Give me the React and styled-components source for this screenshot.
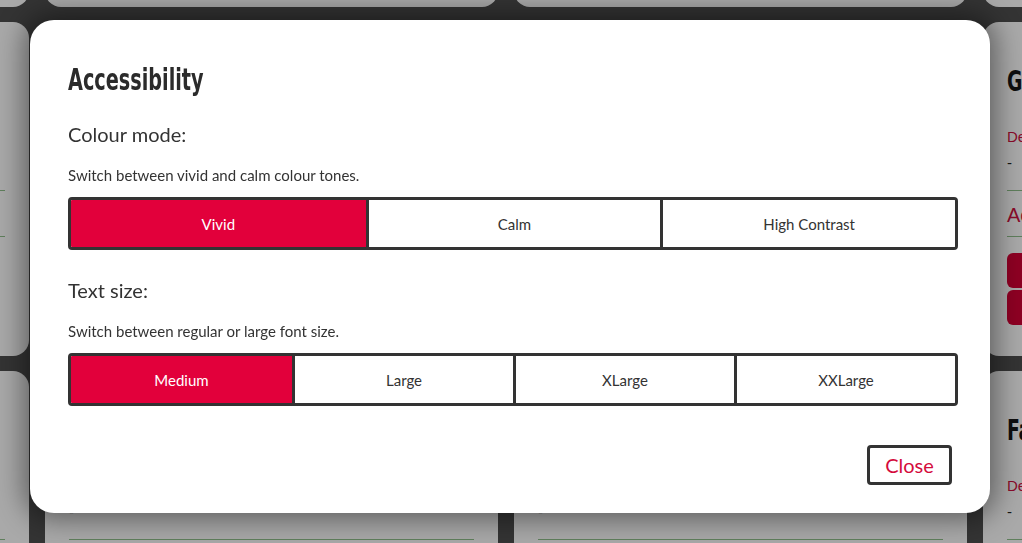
import styled, { createGlobalStyle } from "styled-components";

const GlobalStyle = createGlobalStyle`
  html, body {
    margin: 0;
    padding: 0;
    height: 100%;
    overflow: hidden;
    background: #343434;
  }
  * {
    box-sizing: border-box;
  }
`;

const cards = [
  { title: "Dance", desc: "Description", area: "Arts" },
  { title: "Drama", desc: "Description", area: "Arts" },
  { title: "Debate", desc: "Description", area: "Arts" },
  { title: "Drawing", desc: "Description", area: "Arts" },
  { title: "Cooking", desc: "Description", area: "Arts" },
  { title: "Chess", desc: "Description", area: "Arts" },
  { title: "Choir", desc: "Description", area: "Arts" },
  { title: "Gardening", desc: "Description", area: "Active" },
  { title: "Football", desc: "Description", area: "Active" },
  { title: "Fencing", desc: "Description", area: "Active" },
  { title: "Film", desc: "Description", area: "Active" },
  { title: "Fashion", desc: "Description", area: "Active" },
];

const colourModes = ["Vivid", "Calm", "High Contrast"];
const textSizes = ["Medium", "Large", "XLarge", "XXLarge"];

const App = () => {
  return (
    <>
      <GlobalStyle />
      <Page>
        <CardGrid>
          {cards.map((card) => (
            <Card key={card.title}>
              <CardTitle>{card.title}</CardTitle>
              <CardLabel>{card.desc}</CardLabel>
              <CardValue>-</CardValue>
              <CardRule $gap={17} />
              <CardArea>{card.area}</CardArea>
              <CardRule $gap={10} />
              <CardActions>
                <CardButton>More info</CardButton>
                <CardButton>Sign up</CardButton>
              </CardActions>
            </Card>
          ))}
        </CardGrid>
      </Page>
      <Overlay>
        <Modal>
          <ModalTitle>Accessibility</ModalTitle>
          <SectionLabel>Colour mode:</SectionLabel>
          <SectionHint>Switch between vivid and calm colour tones.</SectionHint>
          <Segmented $count={colourModes.length}>
            {colourModes.map((mode, i) => (
              <Segment key={mode} $active={i === 0}>
                {mode}
              </Segment>
            ))}
          </Segmented>
          <SectionLabel $spaced>Text size:</SectionLabel>
          <SectionHint>Switch between regular or large font size.</SectionHint>
          <Segmented $count={textSizes.length}>
            {textSizes.map((size, i) => (
              <Segment key={size} $active={i === 0}>
                {size}
              </Segment>
            ))}
          </Segmented>
          <Footer>
            <CloseButton>Close</CloseButton>
          </Footer>
        </Modal>
      </Overlay>
    </>
  );
};

const Page = styled.div`
  width: 1022px;
  height: 543px;
  overflow: hidden;
`;

const CardGrid = styled.div`
  display: grid;
  grid-template-columns: repeat(4, 453px);
  grid-auto-rows: 334px;
  gap: 15px 16px;
  margin: -327px 0 0 -424px;
`;

const Card = styled.div`
  background: #a9a9a9;
  border-radius: 16px;
  padding: 42px 24px 0;
  display: flex;
  flex-direction: column;
  font-family: "Liberation Sans", Arial, sans-serif;
`;

const CardTitle = styled.h2`
  margin: 0 0 29px;
  font-family: "DejaVu Sans Condensed", "DejaVu Sans", sans-serif;
  font-weight: 700;
  font-size: 29px;
  line-height: 34px;
  color: #0e0e0e;
  transform: scaleX(0.72);
  transform-origin: left center;
`;

const CardLabel = styled.div`
  font-size: 15px;
  line-height: 20px;
  color: #8a0b2a;
`;

const CardValue = styled.div`
  font-size: 15px;
  line-height: 20px;
  margin-top: 6px;
  color: #151515;
`;

const CardRule = styled.hr`
  border: 0;
  border-top: 1px solid #5f7f5c;
  margin: ${(p) => p.$gap}px 0 0;
  width: 100%;
`;

const CardArea = styled.div`
  font-size: 20px;
  line-height: 22px;
  margin-top: 13px;
  color: #8a0b2a;
`;

const CardActions = styled.div`
  display: flex;
  flex-direction: column;
  align-items: flex-start;
  gap: 2px;
  margin-top: 16px;
`;

const CardButton = styled.div`
  width: 190px;
  height: 35px;
  background: #8e0023;
  border-radius: 6px;
  color: #ddd;
  font-size: 15px;
  display: flex;
  align-items: center;
  justify-content: center;
`;

const Overlay = styled.div`
  position: fixed;
  inset: 0;
  display: flex;
  align-items: flex-start;
  padding: 20px 0 0 30px;
`;

const Modal = styled.div`
  width: 960px;
  height: 493px;
  background: #fff;
  border-radius: 24px;
  box-shadow: 0 0 28px 6px rgba(0, 0, 0, 0.45);
  padding: 41px 32px 0 38px;
  display: flex;
  flex-direction: column;
  font-family: Lato, "Open Sans", sans-serif;
  color: #333;
`;

const ModalTitle = styled.h1`
  margin: 0;
  font-family: "DejaVu Sans Condensed", "DejaVu Sans", sans-serif;
  font-weight: 700;
  font-size: 31px;
  line-height: 37px;
  color: #2b2b2b;
  transform: scaleX(0.69);
  transform-origin: left center;
`;

const SectionLabel = styled.div`
  margin-top: ${(p) => (p.$spaced ? "28px" : "24px")};
  font-size: 20px;
  line-height: 24px;
  color: #333;
`;

const SectionHint = styled.p`
  margin: 20px 0 0;
  font-size: 15px;
  line-height: 18px;
  color: #333;
`;

const Segmented = styled.div`
  margin-top: 13px;
  display: grid;
  grid-template-columns: repeat(${(p) => p.$count}, 1fr);
  height: 53px;
  border: 3px solid #333;
  border-radius: 4px;
  overflow: hidden;
`;

const Segment = styled.div`
  display: flex;
  align-items: center;
  justify-content: center;
  font-size: 15px;
  background: ${(p) => (p.$active ? "#e2003b" : "#fff")};
  color: ${(p) => (p.$active ? "#fff" : "#333")};

  & + & {
    border-left: 3px solid #333;
  }
`;

const Footer = styled.div`
  display: flex;
  justify-content: flex-end;
  margin-top: 39px;
  padding-right: 6px;
`;

const CloseButton = styled.button`
  width: 85px;
  height: 40px;
  background: #fff;
  border: 3px solid #333;
  border-radius: 4px;
  font-family: Lato, "Open Sans", sans-serif;
  font-size: 20px;
  color: #d40b3c;
  cursor: pointer;
  padding: 0;
`;

export default App;
